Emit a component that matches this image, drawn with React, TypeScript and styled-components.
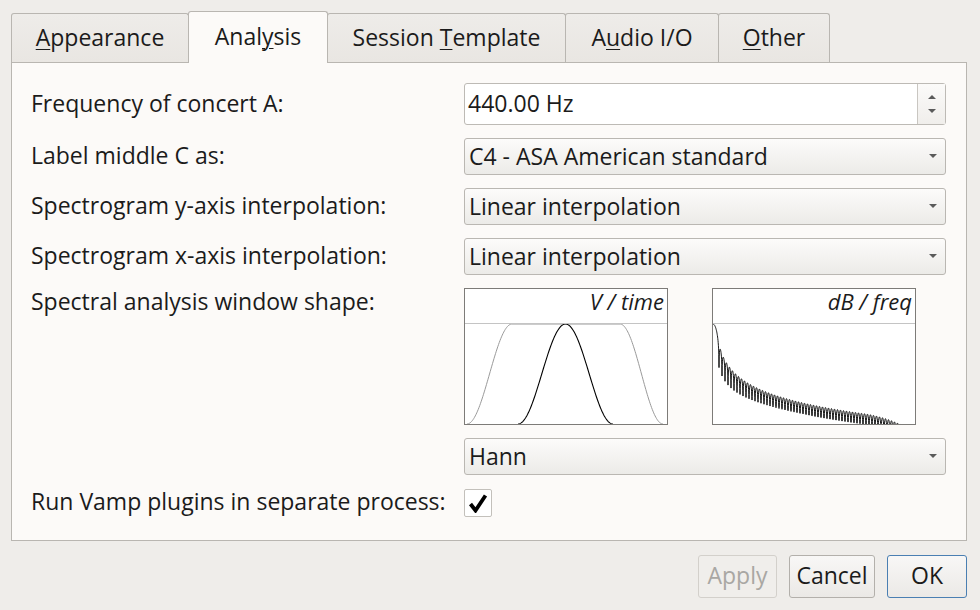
import React from 'react';
import styled, { createGlobalStyle } from 'styled-components';

const Global = createGlobalStyle`
  html, body { margin: 0; padding: 0; background: #efedea; }
  body { font-family: "Open Sans", "Noto Sans", sans-serif; color: #1b1b1b; }
  #root { width: 980px; height: 610px; }
`;

const Dialog = styled.div`
  width: 980px;
  height: 610px;
  box-sizing: border-box;
  padding: 11px 13px 0 11px;
  display: flex;
  flex-direction: column;
  font-size: 23px;
`;

const TabBar = styled.div`
  display: flex;
  align-items: flex-end;
  height: 51px;
  position: relative;
  z-index: 2;
`;

const Tab = styled.div<{ $w: number; $active?: boolean }>`
  box-sizing: border-box;
  width: ${p => p.$w}px;
  height: ${p => (p.$active ? 52 : 49)}px;
  margin-bottom: ${p => (p.$active ? -1 : 0)}px;
  margin-left: -1px;
  &:first-child { margin-left: 0; }
  border: 1px solid #b9b6b1;
  border-bottom: none;
  border-radius: 3px 3px 0 0;
  background: ${p => (p.$active ? '#fcfaf8' : 'linear-gradient(#eeece9, #e9e6e2)')};
  position: relative;
  z-index: ${p => (p.$active ? 2 : 1)};
  display: flex;
  align-items: center;
  justify-content: center;
  padding-bottom: ${p => (p.$active ? 4 : 2)}px;
  line-height: 26px;
`;

const Mn = styled.span`
  text-decoration: underline;
  text-underline-offset: 3px;
  text-decoration-thickness: 1px;
`;

const Panel = styled.div`
  box-sizing: border-box;
  height: 479px;
  border: 1px solid #b9b6b1;
  background: #fcfaf8;
  padding: 20px 20px 0 19px;
  display: flex;
  flex-direction: column;
  gap: 13px;
`;

const Row = styled.div<{ $top?: boolean }>`
  display: grid;
  grid-template-columns: 433px 482px;
  align-items: ${p => (p.$top ? 'start' : 'center')};
`;

const Label = styled.div`
  line-height: 26px;
  padding-bottom: 3px;
  white-space: nowrap;
`;

const SpinBox = styled.div`
  box-sizing: border-box;
  height: 42px;
  border: 1px solid #bdbab5;
  border-radius: 3px;
  background: #ffffff;
  display: flex;
  align-items: stretch;
`;

const SpinText = styled.div`
  flex: 1;
  display: flex;
  align-items: center;
  padding: 0 0 2px 3px;
  line-height: 26px;
`;

const SpinButtons = styled.div`
  width: 27px;
  border-left: 1px solid #c9c6c1;
  background: linear-gradient(#fbfaf9, #f0eeeb);
  display: flex;
  flex-direction: column;
  align-items: center;
  justify-content: center;
  gap: 10px;
`;

const Arrow = styled.div<{ $up?: boolean }>`
  width: 0;
  height: 0;
  border-left: 4px solid transparent;
  border-right: 4px solid transparent;
  ${p => (p.$up ? 'border-bottom: 4px solid #5a5a5a;' : 'border-top: 4px solid #5a5a5a;')}
`;

const Combo = styled.div`
  box-sizing: border-box;
  height: 37px;
  border: 1px solid #bab7b2;
  border-radius: 3px;
  background: linear-gradient(#fcfbfa, #ecebe8);
  display: flex;
  align-items: center;
  justify-content: space-between;
  padding: 0 8px 2px 4px;
  line-height: 26px;
`;

const Graphs = styled.div`
  display: flex;
  gap: 44px;
`;

const GraphBox = styled.div`
  box-sizing: border-box;
  width: 204px;
  height: 137px;
  border: 1px solid #7d7b78;
  background: #ffffff;
  display: flex;
  flex-direction: column;
`;

const GraphHeader = styled.div`
  box-sizing: border-box;
  height: 35px;
  border-bottom: 1.5px solid #c4c4c4;
  display: flex;
  align-items: flex-start;
  justify-content: flex-end;
  padding: 0 3px 0 0;
  font-style: italic;
  font-size: 22px;
  line-height: 24px;
`;

const CheckBox = styled.div`
  box-sizing: border-box;
  width: 28px;
  height: 28px;
  border: 1px solid #c3c0bb;
  border-radius: 2px;
  background: #ffffff;
  display: flex;
  align-items: center;
  justify-content: center;
`;

const ButtonRow = styled.div`
  display: flex;
  justify-content: flex-end;
  gap: 12px;
  margin-top: 14px;
`;

const Button = styled.div<{ $w: number; $disabled?: boolean; $default?: boolean }>`
  box-sizing: border-box;
  width: ${p => p.$w}px;
  height: 43px;
  border-radius: 3px;
  border: 1px solid ${p => (p.$default ? '#4a7fb2' : p.$disabled ? '#d3d0cb' : '#b3b0ab')};
  background: ${p => (p.$disabled ? '#f0eeeb' : 'linear-gradient(#f8f7f6, #ebe9e6)')};
  color: ${p => (p.$disabled ? '#a9a7a3' : '#1b1b1b')};
  display: flex;
  align-items: center;
  justify-content: center;
  padding-bottom: 3px;
  line-height: 26px;
`;

const GW = 202;
const GH = 100;
const TOPY = 0;

function hannTime(): string {
  const pts: string[] = [];
  const x0 = 53, x1 = 148;
  for (let i = 0; i <= 120; i++) {
    const t = i / 120;
    const x = x0 + (x1 - x0) * t;
    const y = GH - (GH - TOPY) * (0.5 - 0.5 * Math.cos(2 * Math.PI * t));
    pts.push(`${x.toFixed(2)},${y.toFixed(2)}`);
  }
  return 'M' + pts.join(' L');
}

function taperTime(): string {
  const pts: string[] = [];
  const a0 = 2, a1 = 47, b0 = 155, b1 = 198;
  for (let i = 0; i <= 60; i++) {
    const t = i / 60;
    const x = a0 + (a1 - a0) * t;
    const y = GH - (GH - TOPY) * (0.5 - 0.5 * Math.cos(Math.PI * t));
    pts.push(`${x.toFixed(2)},${y.toFixed(2)}`);
  }
  for (let i = 0; i <= 60; i++) {
    const t = i / 60;
    const x = b0 + (b1 - b0) * t;
    const y = GH - (GH - TOPY) * (0.5 + 0.5 * Math.cos(Math.PI * t));
    pts.push(`${x.toFixed(2)},${y.toFixed(2)}`);
  }
  return 'M' + pts.join(' L');
}

function hannFreq(): string {
  const pts: string[] = [];
  const pxPerBin = 3.0;
  const pxPerDb = 0.8;
  for (let x = 0; x <= GW; x += 0.2) {
    const f = x / pxPerBin;
    let db: number;
    if (f < 1e-6) db = 0;
    else if (Math.abs(1 - f * f) < 1e-4) db = 20 * Math.log10(0.5);
    else {
      const s = Math.abs(Math.sin(Math.PI * f));
      let sdb = 20 * Math.log10(Math.max(s, 1e-12));
      if (f > 1.9) {
        const D = 13 + 16 * Math.exp(-(f - 2) / 10);
        sdb = Math.max(sdb, -D);
      }
      db = sdb - 20 * Math.log10(Math.PI * f * Math.abs(1 - f * f));
    }
    let y = TOPY - db * pxPerDb;
    if (x > 150) y += 12 * Math.pow((x - 150) / 52, 2);
    y = Math.min(y, GH + 5);
    pts.push(`${x.toFixed(2)},${y.toFixed(2)}`);
  }
  return 'M' + pts.join(' L');
}

const P_HANN = hannTime();
const P_TAPER = taperTime();
const P_FREQ = hannFreq();

const Graph: React.FC<{ title: string; children: React.ReactNode }> = ({ title, children }) => (
  <GraphBox>
    <GraphHeader>{title}</GraphHeader>
    <svg width={GW} height={GH} viewBox={`0 0 ${GW} ${GH}`}>
      {children}
    </svg>
  </GraphBox>
);

const ComboArrow = () => <Arrow />;

export default function App() {
  return (
    <>
      <Global />
      <Dialog>
        <TabBar>
          <Tab $w={178}><span><Mn>A</Mn>ppearance</span></Tab>
          <Tab $w={140} $active><span>Anal<Mn>y</Mn>sis</span></Tab>
          <Tab $w={239}><span>Session <Mn>T</Mn>emplate</span></Tab>
          <Tab $w={154}><span>A<Mn>u</Mn>dio I/O</span></Tab>
          <Tab $w={112}><span><Mn>O</Mn>ther</span></Tab>
        </TabBar>
        <Panel>
          <Row>
            <Label>Frequency of concert A:</Label>
            <SpinBox>
              <SpinText>440.00 Hz</SpinText>
              <SpinButtons>
                <Arrow $up />
                <Arrow />
              </SpinButtons>
            </SpinBox>
          </Row>
          <Row>
            <Label>Label middle C as:</Label>
            <Combo><span>C4 - ASA American standard</span><ComboArrow /></Combo>
          </Row>
          <Row>
            <Label>Spectrogram y-axis interpolation:</Label>
            <Combo><span>Linear interpolation</span><ComboArrow /></Combo>
          </Row>
          <Row>
            <Label>Spectrogram x-axis interpolation:</Label>
            <Combo><span>Linear interpolation</span><ComboArrow /></Combo>
          </Row>
          <Row $top>
            <Label>Spectral analysis window shape:</Label>
            <Graphs>
              <Graph title="V / time">
                <path d={P_TAPER} fill="none" stroke="#9a9a9a" strokeWidth={1} />
                <path d={P_HANN} fill="none" stroke="#000" strokeWidth={1.1} />
              </Graph>
              <Graph title="dB / freq">
                <path d={P_FREQ} fill="none" stroke="#000" strokeWidth={0.9} />
              </Graph>
            </Graphs>
          </Row>
          <Row>
            <Label />
            <Combo><span>Hann</span><ComboArrow /></Combo>
          </Row>
          <Row>
            <Label>Run Vamp plugins in separate process:</Label>
            <CheckBox>
              <svg width="20" height="20" viewBox="0 0 20 20">
                <path d="M2.5 11 L7.5 17.5 L17.5 2.5" fill="none" stroke="#000" strokeWidth={3.8} strokeLinejoin="miter" strokeLinecap="butt" />
              </svg>
            </CheckBox>
          </Row>
        </Panel>
        <ButtonRow>
          <Button $w={79} $disabled>Apply</Button>
          <Button $w={86}>Cancel</Button>
          <Button $w={80} $default>OK</Button>
        </ButtonRow>
      </Dialog>
    </>
  );
}
